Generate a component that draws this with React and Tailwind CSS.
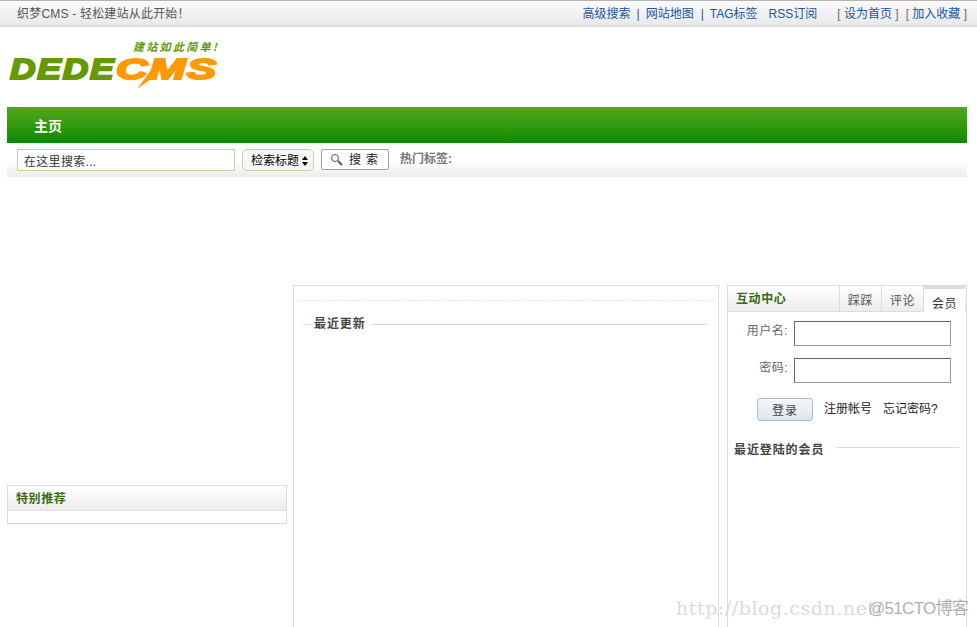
import React from 'react';

const sans = 'font-["Liberation_Sans","Noto_Sans_CJK_SC",sans-serif]';

const Logo = () => (
  <div className="relative w-[215px] h-[56px] ml-[3px]">
    <span className='absolute left-[123px] top-[0px] text-[11px] leading-[14px] italic font-bold text-[#5f9a00] tracking-[2.3px] whitespace-nowrap font-["Noto_Sans_CJK_SC",sans-serif]'>建站如此简单!</span>
    <div className='absolute left-0 top-[14px] italic font-black text-[30px] leading-[32px] font-["Liberation_Sans",sans-serif] [-webkit-text-stroke:2px_currentColor]'>
      <span className="absolute left-0 top-0 text-[#669900] tracking-[1.5px] scale-x-[1.18] origin-left">DEDE</span>
      <span className="absolute left-[106px] top-0 text-[#ff9900] tracking-[1px] scale-x-[1.46] origin-left">CMS</span>
    </div>
    <svg className="absolute left-[127px] top-[23px]" width="22" height="27" viewBox="0 0 22 27">
      <path d="M20 0 L0 27 L14 17 L22 3 Z" fill="#ff9900" />
    </svg>
  </div>
);

const App = () => {
  return (
    <div className={`relative w-[977px] h-[627px] overflow-hidden bg-white text-[12px] ${sans}`}>
      {/* top bar */}
      <div className="h-[27px] pt-[1px] border-t border-t-[#b4b4b4] border-b-2 border-b-[#dcdcdc] bg-gradient-to-b from-[#fafafa] to-[#e9e9e9] flex items-center pl-[17px] pr-[10px] text-[#555]">
        <span className="tracking-[0.2px]">织梦CMS - 轻松建站从此开始！</span>
        <div className="ml-auto flex items-center whitespace-nowrap">
          <span className="text-[#22559c]">高级搜索</span>
          <span className="mx-[6px] text-[#22559c]">|</span>
          <span className="text-[#22559c]">网站地图</span>
          <span className="ml-[7px] mr-[6px] text-[#22559c]">|</span>
          <span className="text-[#22559c]">TAG标签</span>
          <span className="ml-[11px] text-[#22559c]">RSS订阅</span>
          <span className="ml-[20px] text-[#8a6a45]">[ <span className="text-[#22559c]">设为首页</span> ]</span>
          <span className="ml-[7px] text-[#8a6a45]">[ <span className="text-[#22559c]">加入收藏</span> ]</span>
        </div>
      </div>

      <div className="px-[7px] w-[974px]">
        {/* logo */}
        <div className="h-[80px] pt-[12px]">
          <Logo />
        </div>

        {/* nav */}
        <div className="h-[36px] pt-[2px] bg-gradient-to-b from-[#4fa81a] to-[#008a00] flex items-center pl-[27px]">
          <span className="text-white text-[14px] font-bold">主页</span>
        </div>

        {/* search */}
        <div className="h-[34px] bg-gradient-to-b from-white from-50% to-[#ececec] flex items-start pt-[6px] pl-[10px]">
          <div className="w-[218px] h-[22px] bg-white border border-[#b5dc9e] pl-[6px] text-[#333] leading-[24px] tracking-[0.3px]">在这里搜索...</div>
          <div className="ml-[7px] w-[72px] h-[22px] pt-[1px] border border-[#b5dc9e] rounded-[5px] bg-[#f7f7f7] flex items-center pl-[8px] text-black whitespace-nowrap">
            检索标题
            <span className="ml-[3px] flex flex-col gap-[2px]">
              <span className="w-0 h-0 border-x-[3px] border-x-transparent border-b-[4px] border-b-black" />
              <span className="w-0 h-0 border-x-[3px] border-x-transparent border-t-[4px] border-t-black" />
            </span>
          </div>
          <div className="ml-[7px] w-[68px] h-[21px] border border-[#a0a0a0] rounded-[2px] bg-white flex items-center pl-[8px] text-[#222] whitespace-nowrap">
            <svg width="13" height="13" viewBox="0 0 13 13" fill="none" stroke="#555">
              <circle cx="5" cy="5" r="3.5" />
              <path d="M8 8 L12 12" strokeWidth="2" />
            </svg>
            <span className="ml-[6px] tracking-[5px]">搜索</span>
          </div>
          <span className="ml-[11px] mt-[1px] text-[#777] font-bold">热门标签:</span>
        </div>

        {/* columns */}
        <div className="mt-[108px] flex items-start">
          <div className="w-[280px] pt-[200px]">
            <div className="h-[39px] border border-[#dcdcdc]">
              <div className="h-[25px] border-b border-[#dcdcdc] bg-gradient-to-b from-white to-[#ececec] pl-[8px] leading-[26px] font-bold text-[#3a6a10] tracking-[0.6px]">特别推荐</div>
            </div>
          </div>

          <div className="ml-[6px] w-[426px] h-[400px] border border-[#dcdcdc] px-[4px]">
            <div className="mt-[14px] border-t border-dashed border-[#e8e8e8]" />
            <div className="mt-[14px] flex items-center ml-[5px] mr-[7px]">
              <div className="w-[8px] h-px bg-[#dcdcdc]" />
              <span className="mx-[3px] font-bold text-[#444] tracking-[0.9px] whitespace-nowrap">最近更新</span>
              <div className="flex-1 ml-[3px] h-px bg-[#dcdcdc]" />
            </div>
          </div>

          <div className="ml-[8px] w-[240px] h-[400px] border border-[#dcdcdc]">
            <div className="h-[26px] flex border-b border-[#dcdcdc] bg-gradient-to-b from-white to-[#ececec]">
              <div className="w-[111px] pl-[8px] leading-[26px] font-bold text-[#3a6a10] tracking-[0.6px]">互动中心</div>
              <div className="w-[42px] border-l border-[#dcdcdc] text-center leading-[30px] text-[#555] tracking-[0.5px]">踩踩</div>
              <div className="w-[42px] border-l border-[#dcdcdc] text-center leading-[30px] text-[#555] tracking-[0.5px]">评论</div>
              <div className="w-[42px] -mb-px h-[26px] border-t-[3px] border-t-[#dcdcdc] border-l border-l-[#dcdcdc] bg-white text-center leading-[30px] text-[#333] tracking-[0.5px]">会员</div>
            </div>
            <div className="mt-[9px] flex items-start">
              <span className="w-[60px] text-right text-[#666] leading-[20px] tracking-[0.5px]">用户名:</span>
              <div className="ml-[6px] w-[157px] h-[25px] border border-[#999] border-t-[#666] border-l-[#666]" />
            </div>
            <div className="mt-[12px] flex items-start">
              <span className="w-[60px] text-right text-[#666] leading-[20px] tracking-[0.5px]">密码:</span>
              <div className="ml-[6px] w-[157px] h-[25px] border border-[#999] border-t-[#666] border-l-[#666]" />
            </div>
            <div className="mt-[15px] ml-[29px] flex items-start text-[#222] whitespace-nowrap">
              <div className="w-[56px] h-[23px] border border-[#a8bccd] rounded-[3px] bg-gradient-to-b from-[#f4f7fa] to-[#dde6ee] text-center leading-[24px] text-[#444] tracking-[1px]">登录</div>
              <span className="ml-[11px] leading-[22px]">注册帐号</span>
              <span className="ml-[11px] leading-[22px]">忘记密码?</span>
            </div>
            <div className="mt-[20px] ml-[6px] mr-[7px] flex items-center">
              <span className="font-bold text-[#444] tracking-[0.9px] whitespace-nowrap">最近登陆的会员</span>
              <div className="flex-1 ml-[12px] mb-[6px] h-px bg-[#dcdcdc]" />
            </div>
          </div>
        </div>
      </div>

      {/* watermarks */}
      <span className='absolute left-[676px] top-[596px] text-[#dcdcd4] text-[19px] leading-[24px] tracking-[0.55px] whitespace-nowrap font-["DejaVu_Serif","Liberation_Serif",serif]'>http://blog.csdn.net/</span>
      <span className="absolute left-[868px] top-[598px] text-[#b0b0b0] text-[17px] leading-[22px] whitespace-nowrap tracking-[-0.7px]">@51CTO博客</span>
    </div>
  );
};

export default App;
